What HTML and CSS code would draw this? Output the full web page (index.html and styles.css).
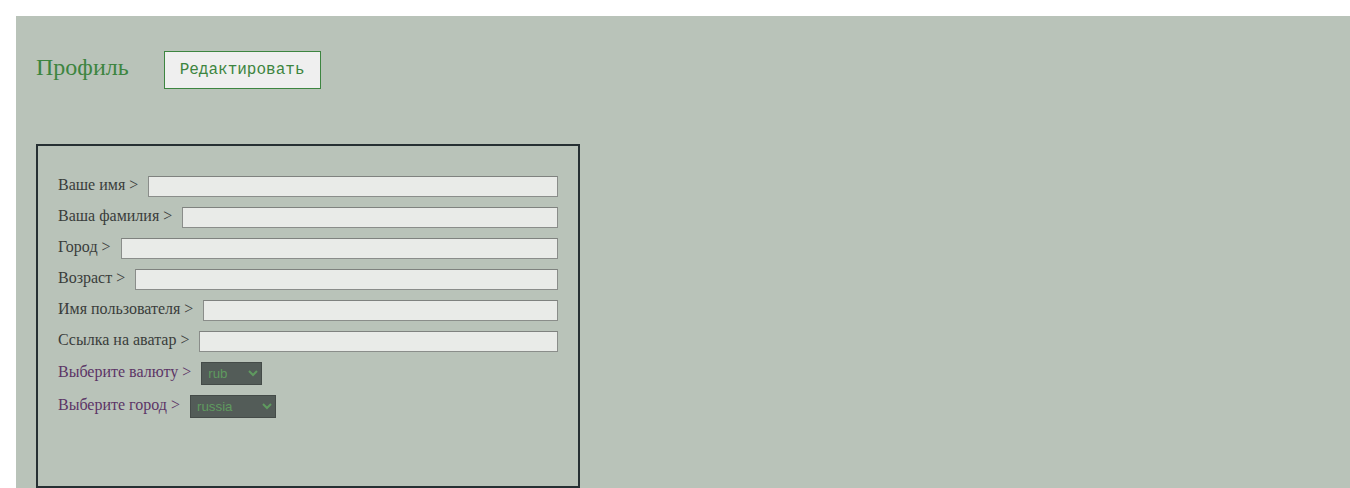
FILE: index.html
```html
<!DOCTYPE html>
<html lang="ru">
<head>
    <meta charset="UTF-8">
    <meta name="viewport" content="width=device-width, initial-scale=1.0">
    <title>Профиль</title>
    <link rel="stylesheet" href="styles.css">
</head>
<body>
    <div class="page">
        <!-- Шапка профиля -->
        <div class="profile-header">
            <h1 class="profile-title">Профиль</h1>
            <button class="edit-button">Редактировать</button>
        </div>

        <!-- Форма редактирования -->
        <div class="profile-form">
            <div class="form-row">
                <label for="first-name">Ваше имя &gt;</label>
                <input type="text" id="first-name">
            </div>
            <div class="form-row">
                <label for="last-name">Ваша фамилия &gt;</label>
                <input type="text" id="last-name">
            </div>
            <div class="form-row">
                <label for="city">Город &gt;</label>
                <input type="text" id="city">
            </div>
            <div class="form-row">
                <label for="age">Возраст &gt;</label>
                <input type="text" id="age">
            </div>
            <div class="form-row">
                <label for="username">Имя пользователя &gt;</label>
                <input type="text" id="username">
            </div>
            <div class="form-row">
                <label for="avatar">Ссылка на аватар &gt;</label>
                <input type="text" id="avatar">
            </div>
            <div class="form-row select-row">
                <label for="currency">Выберите валюту &gt;</label>
                <select id="currency" class="select-currency">
                    <option>rub</option>
                    <option>usd</option>
                    <option>eur</option>
                </select>
            </div>
            <div class="form-row select-row">
                <label for="country">Выберите город &gt;</label>
                <select id="country" class="select-city">
                    <option>russia</option>
                    <option>belarus</option>
                </select>
            </div>
        </div>
    </div>
</body>
</html>
```

FILE: styles.css
```css
/* Базовые стили */
* {
    box-sizing: border-box;
}

body {
    margin: 16px 0 0 16px;
    font-family: 'Liberation Serif', 'Times New Roman', serif;
    background: #fff;
    overflow: hidden;
}

/* Основная область */
.page {
    background: #b9c3b9;
    min-height: 472px;
    padding: 35px 20px 0;
}

/* Шапка */
.profile-header {
    display: flex;
    align-items: center;
    gap: 35px;
    margin-bottom: 55px;
}

.profile-title {
    margin: 0;
    font-size: 24px;
    font-weight: normal;
    color: #3d8540;
    position: relative;
    top: -3px;
}

.edit-button {
    font-family: 'Liberation Mono', 'Courier New', monospace;
    font-size: 16px;
    line-height: 18px;
    color: #3d8540;
    background: #efefef;
    border: 1px solid #3d8540;
    padding: 9px 16px 9px 15px;
    cursor: pointer;
}

/* Форма */
.profile-form {
    width: 544px;
    height: 344px;
    border: 2px solid #263033;
    padding: 30px 20px 0;
}

.form-row {
    display: flex;
    align-items: center;
    gap: 10px;
    height: 21px;
    margin-bottom: 10px;
    font-size: 16px;
    color: #3a3d3b;
}

.form-row label {
    white-space: nowrap;
    position: relative;
    top: -2px;
}

.form-row input {
    flex: 1;
    height: 21px;
    background: #e9ebe8;
    border: 1px solid #8a8d8a;
    border-top-color: #7f827f;
    outline: none;
}

.select-row {
    height: 23px;
    color: #5c3566;
}

.select-row select {
    height: 23px;
    padding: 0 0 0 2px;
    font-family: 'Liberation Sans', Arial, sans-serif;
    font-size: 13.33px;
    color: #5f9a5f;
    background: #535c58;
    border: 1px solid #444b48;
    border-radius: 0;
}

.select-currency {
    width: 61px;
}

.select-city {
    width: 86px;
}
```
